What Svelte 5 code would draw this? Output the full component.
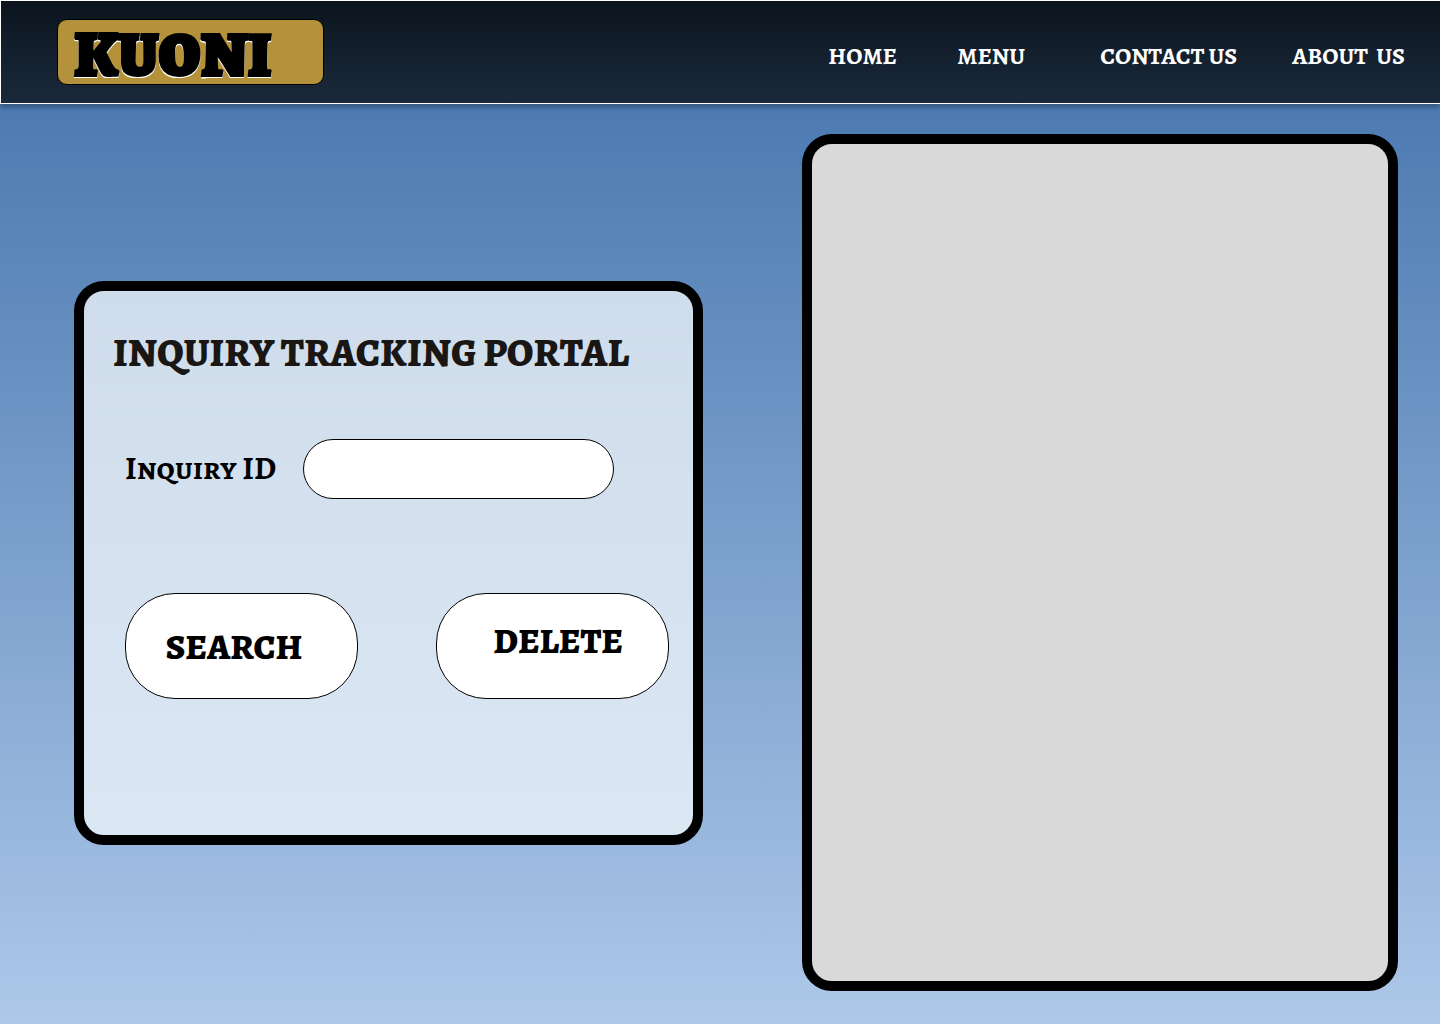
<script>
  const links = ['HOME', 'MENU', 'CONTACT US', 'ABOUT\u00a0 US'];
  let inquiryId = $state('');
</script>

<div class="page">
  <header>
    <a class="logo" href="#home">KUONI</a>
    <nav>
      {#each links as link}
        <a href="#{link.toLowerCase().replace(/\s+/g, '-')}">{link}</a>
      {/each}
    </nav>
  </header>

  <main>
    <section class="card">
      <h1>INQUIRY TRACKING PORTAL</h1>
      <form onsubmit={(e) => e.preventDefault()}>
        <div class="field">
          <label for="inquiry-id">Inquiry ID</label>
          <input id="inquiry-id" type="text" bind:value={inquiryId} />
        </div>
        <div class="actions">
          <button class="search" type="submit">SEARCH</button>
          <button class="delete" type="button" onclick={() => (inquiryId = '')}>DELETE</button>
        </div>
      </form>
    </section>
    <section class="result" aria-label="Inquiry details"></section>
  </main>
</div>

<style>
  :global(body) {
    margin: 0;
  }

  .page,
  .page * {
    box-sizing: border-box;
  }

  .page {
    display: flex;
    flex-direction: column;
    min-height: 100vh;
    font-family: Alegreya, 'Liberation Serif', serif;
    font-weight: 700;
    color: #000;
    background: linear-gradient(180deg, #4c7ab1 10%, #adc8e9 100%);
  }

  header {
    display: flex;
    align-items: center;
    justify-content: space-between;
    padding: 18px 35px 18px 56px;
    border: 1px solid #fff;
    border-right: 0;
    background: linear-gradient(180deg, #0c151e 0%, #1a293b 100%);
    box-shadow: 0 4px 4px rgba(0, 0, 0, 0.25);
  }

  .logo {
    width: 267px;
    padding: 6px 0 0 16px;
    border: 1px solid #000;
    border-radius: 10px;
    background: #b3923b;
    color: #000;
    font-size: 64px;
    font-weight: 900;
    line-height: 58px;
    text-decoration: none;
    -webkit-text-stroke: 2px #000;
    text-shadow: 0 2px 0 #fff, 1px 2px 0 #fff, -1px 2px 0 #fff;
  }

  nav {
    display: grid;
    grid-template-columns: 129px 143px 192px auto;
    padding-top: 8px;
  }

  nav a {
    color: #fff;
    font-size: 24px;
    line-height: 28px;
    text-decoration: none;
    white-space: nowrap;
  }

  main {
    flex: 1;
    display: grid;
    grid-template-columns: 629fr 596fr;
    column-gap: 99px;
    align-items: center;
    padding: 30px 42px 33px 74px;
  }

  .card,
  .result {
    border: 10px solid #000;
    border-radius: 30px;
  }

  .card {
    padding: 38px 24px 136px 29px;
    background: linear-gradient(180deg, #cfdceb 0%, #dbe7f3 100%);
  }

  .result {
    align-self: stretch;
    background: #d9d9d9;
  }

  h1 {
    margin: 0 0 62px;
    color: #1a1613;
    font-size: 40px;
    font-weight: 800;
    line-height: 48px;
    white-space: nowrap;
  }

  form {
    padding-left: 12px;
  }

  .field {
    display: grid;
    grid-template-columns: 178px 1fr;
    align-items: center;
    padding-right: 55px;
    margin-bottom: 94px;
  }

  label {
    padding-bottom: 2px;
    font-family: 'Alegreya SC', Alegreya, 'Liberation Serif', serif;
    font-size: 32px;
    font-weight: 700;
    line-height: 40px;
  }

  input {
    width: 100%;
    height: 60px;
    padding: 0 24px;
    border: 1px solid #000;
    border-radius: 30px;
    background: #fff;
    font: inherit;
    font-size: 24px;
  }

  .actions {
    display: grid;
    grid-template-columns: 1fr 1fr;
    column-gap: 78px;
  }

  button {
    height: 106px;
    border: 1px solid #000;
    border-radius: 50px;
    background: #fff;
    color: #000;
    font: inherit;
    font-size: 36px;
    font-weight: 800;
    line-height: 40px;
    cursor: pointer;
  }

  .search {
    padding: 2px 15px 0 0;
  }

  .delete {
    padding: 0 0 10px 11px;
  }
</style>
